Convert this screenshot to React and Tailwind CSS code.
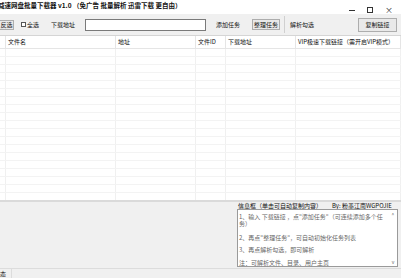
import React from 'react'

const cols = [
  { label: '', w: 'w-[6px]' },
  { label: '文件名', w: 'w-[110px]' },
  { label: '地址', w: 'w-[80px]' },
  { label: '文件ID', w: 'w-[30px]' },
  { label: '下载地址', w: 'w-[70px]' },
  { label: 'VIP极速下载链接（需开启VIP模式）', w: 'flex-1' },
]

const rows = Array.from({ length: 19 })

const App = () => {
  return (
    <div
      className="w-[401px] h-[278px] flex flex-col bg-[#f0f0f0] overflow-hidden text-[6px] leading-none text-[#111]"
      style={{ fontFamily: '"Noto Sans CJK SC", "Noto Sans", sans-serif' }}
    >
      {/* 标题栏 */}
      <div className="h-[14px] bg-white flex items-start relative shrink-0">
        <div className="ml-[-2px] mt-[2px] font-bold text-[6.5px] whitespace-nowrap">
          减速网盘批量下载器 v1.0 （免广告 批量解析 迅雷下载 更自由）
        </div>
        <div className="ml-auto flex items-center gap-[12px] mt-[6px] mr-[8px] text-[#333]">
          <span className="w-[6px] h-px bg-[#333]" />
          <span className="w-[6px] h-[6px] border border-[#333]" />
          <span className="text-[8px] leading-none">×</span>
        </div>
      </div>

      {/* 工具栏 */}
      <div className="h-[21px] shrink-0 flex items-center bg-[#f0f0f0]">
        <button className="h-[10px] w-[15px] border border-[#adadad] bg-[#e9e9e9] flex items-center justify-center text-[6px] ml-[-1px]">
          反选
        </button>
        <label className="flex items-center ml-[7px] gap-[1px]">
          <span className="w-[5px] h-[5px] border border-[#555] bg-white" />
          全选
        </label>
        <span className="ml-[12px]">下载地址</span>
        <div className="ml-[10px] w-[121px] h-[12px] border border-[#7a7a7a] bg-white" />
        <span className="ml-[10px]">添加任务</span>
        <button className="ml-[12px] h-[11px] w-[28px] border border-[#adadad] bg-[#e9e9e9] flex items-center justify-center text-[6px]">
          整理任务
        </button>
        <span className="ml-[4px] w-px h-[17px] bg-[#d0d0d0]" />
        <span className="ml-[5px]">解析勾选</span>
        <button className="ml-auto mr-[4px] h-[14px] w-[39px] border border-[#adadad] bg-[#e9e9e9] flex items-center justify-center text-[6px]">
          复制链接
        </button>
      </div>

      {/* 列表 */}
      <div className="flex-1 bg-white border-t border-[#d5d5d5] flex flex-col overflow-hidden">
        <div className="h-[13px] shrink-0 flex border-b border-[#e5e5e5]">
          {cols.map((c, i) => (
            <div
              key={i}
              className={`${c.w} shrink-0 flex items-center pl-[2px] border-r border-[#e5e5e5] whitespace-nowrap`}
            >
              {c.label}
            </div>
          ))}
        </div>
        <div className="flex-1 flex flex-col">
          {rows.map((_, r) => (
            <div key={r} className="h-[8px] shrink-0 flex border-b border-[#f3f3f3]">
              {cols.map((c, i) => (
                <div key={i} className={`${c.w} shrink-0 border-r border-[#f0f0f0]`} />
              ))}
            </div>
          ))}
        </div>
      </div>

      {/* 信息区 */}
      <div className="h-[68px] shrink-0 border-t-2 border-[#dadada] flex">
        <div className="ml-[237px] flex-1 flex flex-col pr-[3px]">
          <div className="h-[7px] mt-[1px] flex items-center whitespace-nowrap pl-[1px]">
            信息框（单击可自动复制内容）
            <span className="ml-[10px]">By: 粉墨江南WGPOJIE</span>
          </div>
          <div className="flex-1 mb-[1px] bg-white border border-[#9a9a9a] flex">
            <div className="flex-1 text-[#666] pl-[1px] pt-[3px] leading-[7px]">
              <p>1、输入 下载链接 ，点"添加任务"（可连续添加多个任务）</p>
              <p className="mt-[7px]">2、再点"整理任务"，可自动初始化任务列表</p>
              <p className="mt-[5px]">3、再点解析勾选，即可解析</p>
              <p className="mt-[6px]">注：可解析文件、目录、用户主页</p>
            </div>
            <div className="w-[8px] flex flex-col justify-between items-center text-[#666] text-[5px] py-[2px]">
              <span>^</span>
              <span>v</span>
            </div>
          </div>
        </div>
      </div>

      {/* 状态栏 */}
      <div className="h-[10px] shrink-0 border-t border-[#dcdcdc] flex items-center">
        <span className="ml-[-6px] w-[18px] h-full flex items-center border-r border-[#dcdcdc]">状态</span>
      </div>
    </div>
  )
}

export default App
